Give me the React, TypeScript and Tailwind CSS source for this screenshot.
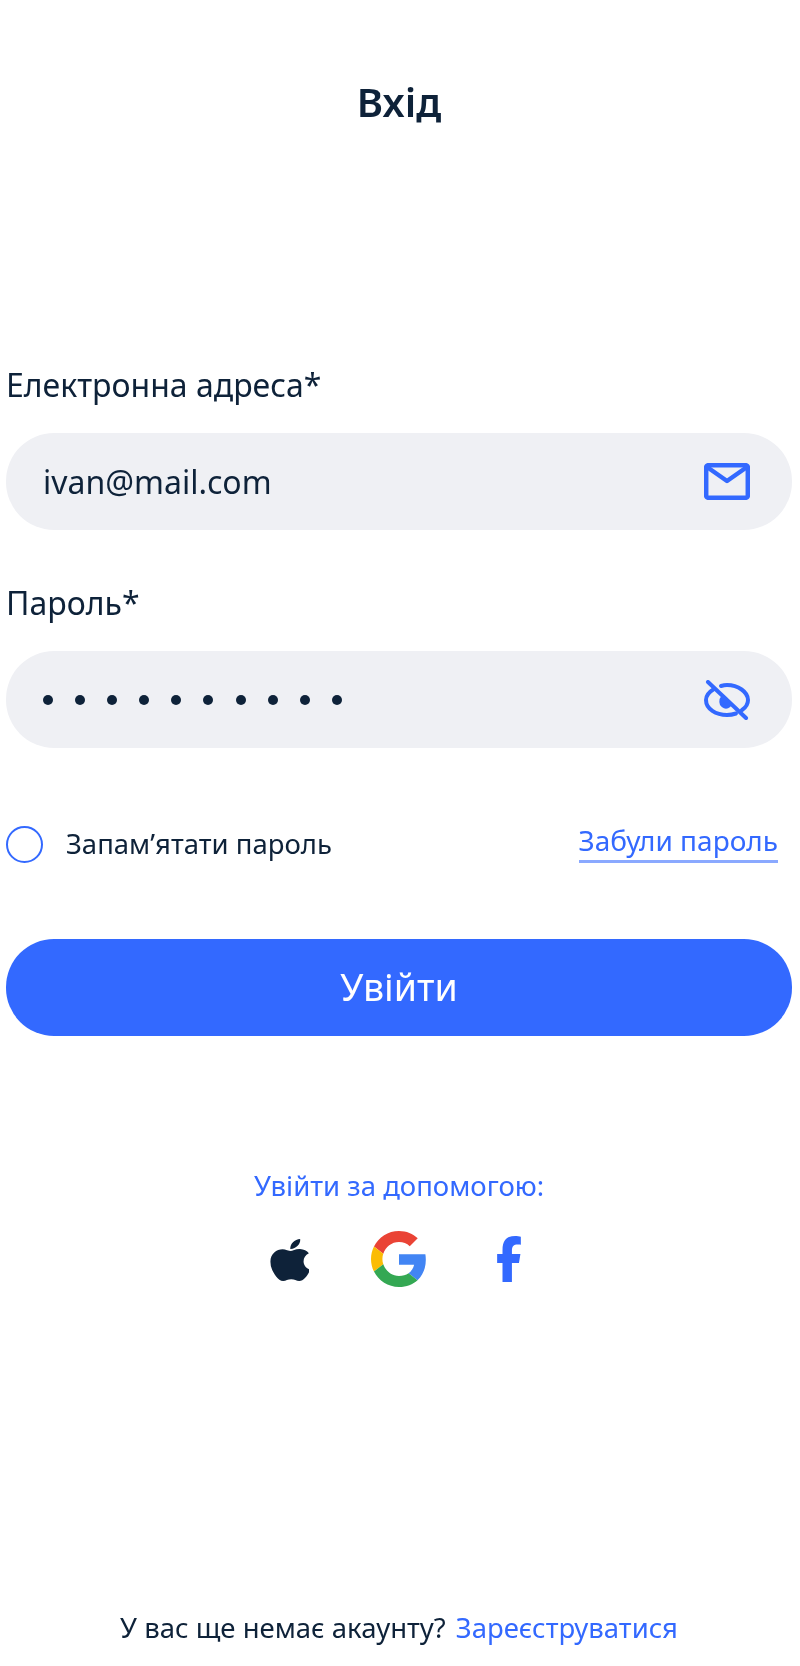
import React from "react";

const font = { fontFamily: '"Noto Sans", sans-serif' };

function Field({ label, children, icon }: { label: string; children: React.ReactNode; icon: React.ReactNode }) {
  return (
    <div className="flex flex-col">
      <label className="h-[44px] text-[32px] leading-[44px] text-[#0e2239]">{label}</label>
      <div className="mt-[26px] flex h-[97px] items-center justify-between rounded-[48px] bg-[#eff0f4] pl-[37px] pr-[42px]">
        {children}
        {icon}
      </div>
    </div>
  );
}

const MailIcon = () => (
  <svg width="46" height="37" viewBox="0 0 46 37" fill="none" stroke="#3369ff" strokeWidth="4.500" strokeLinejoin="round" strokeLinecap="round">
    <rect x="2.200" y="2.200" width="41.600" height="32.600" rx="2" />
    <path d="M3 4L23 18L43 4" />
  </svg>
);

const EyeOffIcon = () => (
  <svg width="46" height="40" viewBox="0 0 46 40" fill="none" stroke="#3369ff" strokeWidth="4" strokeLinecap="round" strokeLinejoin="round">
    <path d="M4 2L42 38" />
    <path d="M10 9C5 12 2 16 2 20C2 29 12 35 23 35C26 35 29 34.500 32 33.500" />
    <path d="M17 6C19 5.400 21 5 23 5C34 5 44 12 44 20C44 24 41 28 38 30" />
    <path d="M19 17C16.500 20 17 24 19 25.500C21 27 23 27 25 25.500Z" fill="#3369ff" />
  </svg>
);

const AppleIcon = () => (
  <svg width="39" height="46" viewBox="0 0 370 490" preserveAspectRatio="none" fill="#0e2239">
    <path d="M318.700 268.700c-.2-36.700 16.400-64.400 50-84.800-18.800-26.900-47.200-41.700-84.700-44.600-35.500-2.800-74.300 20.700-88.500 20.700-15 0-49.400-19.700-76.400-19.700C63.300 141.200 4 184.800 4 273.500q0 39.300 14.400 81.200c12.800 36.700 59 126.700 107.200 125.200 25.200-.6 43-17.900 75.800-17.900 31.800 0 48.300 17.900 76.400 17.900 48.600-.7 90.400-82.500 102.600-119.300-65.200-30.700-61.700-90-61.700-91.900zm-56.600-164.200c27.300-32.400 24.800-61.900 24-72.500-24.100 1.400-52 16.400-67.900 34.900-17.500 19.800-27.800 44.300-25.600 71.900 26.100 2 49.900-11.400 69.500-34.300z" />
  </svg>
);

const GoogleIcon = () => (
  <svg width="56" height="56" viewBox="0 0 48 48">
    <path fill="#EA4335" d="M24 9.500c3.540 0 6.710 1.220 9.210 3.600l6.850-6.850C35.900 2.380 30.470 0 24 0 14.620 0 6.510 5.380 2.560 13.220l7.980 6.190C12.430 13.720 17.740 9.500 24 9.500z" />
    <path fill="#4285F4" d="M46.980 24.550c0-1.570-.15-3.090-.38-4.550H24v9.020h12.940c-.58 2.960-2.260 5.480-4.780 7.180l7.730 6c4.510-4.180 7.090-10.360 7.090-17.650z" />
    <path fill="#FBBC05" d="M10.530 28.590c-.48-1.450-.76-2.990-.76-4.590s.27-3.140.76-4.590l-7.980-6.190C.92 16.460 0 20.120 0 24c0 3.880.92 7.540 2.560 10.780l7.970-6.190z" />
    <path fill="#34A853" d="M24 48c6.480 0 11.930-2.130 15.890-5.810l-7.730-6c-2.150 1.450-4.920 2.300-8.160 2.300-6.260 0-11.570-4.220-13.470-9.910l-7.980 6.190C6.510 42.620 14.620 48 24 48z" />
  </svg>
);

const FacebookIcon = () => (
  <svg width="26" height="46" viewBox="0 0 320 512" preserveAspectRatio="none" fill="#3369ff">
    <path d="M80 299.300V512H196V299.300h86.500l18-97.800H196V166.900c0-51.700 20.300-71.500 72.700-71.500c16.300 0 29.400 .4 37 1.200V7.900C291.400 4 256.400 0 236.200 0C129.300 0 80 50.500 80 159.400v42.100H14v97.800H80z" />
  </svg>
);

export default function App() {
  return (
    <div style={font} className="flex h-[1666px] w-[800px] flex-col bg-white pl-[6px] pr-[8px] blur-[0.7px]">
      <h1 className="mt-[78px] h-[48px] text-center text-[40px] font-semibold leading-[48px] text-[#0e2239]">Вхід</h1>

      <div className="mt-[237px] flex flex-col gap-[51px]">
        <Field label="Електронна адреса*" icon={<MailIcon />}>
          <span className="text-[32px] text-[#0e2239]">ivan@mail.com</span>
        </Field>
        <Field label="Пароль*" icon={<EyeOffIcon />}>
          <div className="flex gap-[22.100px]">
            {Array.from({ length: 10 }).map((_, i) => (
              <span key={i} className="h-[10px] w-[10px] rounded-full bg-[#0e2239]" />
            ))}
          </div>
        </Field>
      </div>

      <div className="mt-[77px] flex h-[38px] items-center justify-between pr-[14px]">
        <div className="flex items-center gap-[23px]">
          <span className="h-[37px] w-[37px] rounded-full border-[2.500px] border-[#3369ff]" />
          <span className="text-[27.500px] leading-[36px] text-[#0e2239]">Запам’ятати пароль</span>
        </div>
        <a className="mt-[2px] border-b-[3px] border-[#8aa9ff] pb-[6px] text-[28px] leading-[27px] text-[#3369ff]">Забули пароль</a>
      </div>

      <button className="mt-[76px] h-[97px] rounded-[48px] bg-[#3369ff] text-[37.500px] text-white">Увійти</button>

      <p className="mt-[132px] text-center text-[27.500px] leading-[36px] text-[#3369ff]">Увійти за допомогою:</p>

      <div className="mt-[27px] flex items-center justify-center">
        <div className="flex w-[110px] justify-center"><AppleIcon /></div>
        <div className="flex w-[110px] justify-center"><GoogleIcon /></div>
        <div className="flex w-[110px] justify-center"><FacebookIcon /></div>
      </div>

      <p className="mt-auto mb-[20px] flex justify-center gap-[10px] text-[27.500px] leading-[36px] text-[#0e2239]">
        <span>У вас ще немає акаунту?</span>
        <a className="text-[#3369ff]">Зареєструватися</a>
      </p>
    </div>
  );
}
